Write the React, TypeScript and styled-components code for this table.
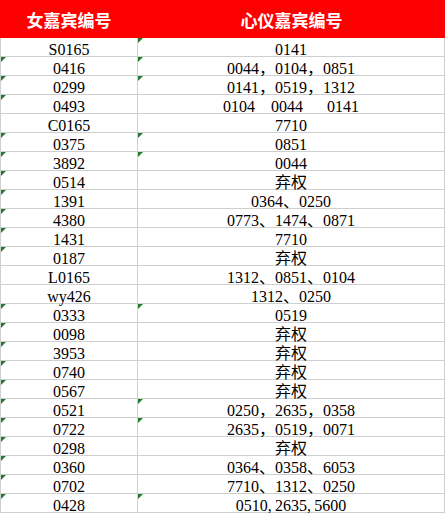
import styled, { createGlobalStyle } from "styled-components";

type Entry = {
  guest: string;
  picks: string;
  guestFlag: boolean;
  picksFlag: boolean;
};

const rows: Entry[] = [
  { guest: "S0165", picks: "0141", guestFlag: false, picksFlag: true },
  { guest: "0416", picks: "0044，0104，0851", guestFlag: true, picksFlag: true },
  { guest: "0299", picks: "0141，0519，1312", guestFlag: true, picksFlag: true },
  { guest: "0493", picks: "0104  0044   0141", guestFlag: true, picksFlag: false },
  { guest: "C0165", picks: "7710", guestFlag: false, picksFlag: false },
  { guest: "0375", picks: "0851", guestFlag: true, picksFlag: true },
  { guest: "3892", picks: "0044", guestFlag: true, picksFlag: true },
  { guest: "0514", picks: "弃权", guestFlag: true, picksFlag: false },
  { guest: "1391", picks: "0364、0250", guestFlag: true, picksFlag: false },
  { guest: "4380", picks: "0773、1474、0871", guestFlag: true, picksFlag: false },
  { guest: "1431", picks: "7710", guestFlag: true, picksFlag: false },
  { guest: "0187", picks: "弃权", guestFlag: true, picksFlag: false },
  { guest: "L0165", picks: "1312、0851、0104", guestFlag: false, picksFlag: false },
  { guest: "wy426", picks: "1312、0250", guestFlag: false, picksFlag: false },
  { guest: "0333", picks: "0519", guestFlag: true, picksFlag: true },
  { guest: "0098", picks: "弃权", guestFlag: true, picksFlag: false },
  { guest: "3953", picks: "弃权", guestFlag: true, picksFlag: false },
  { guest: "0740", picks: "弃权", guestFlag: true, picksFlag: false },
  { guest: "0567", picks: "弃权", guestFlag: true, picksFlag: false },
  { guest: "0521", picks: "0250，2635，0358", guestFlag: true, picksFlag: true },
  { guest: "0722", picks: "2635，0519，0071", guestFlag: true, picksFlag: true },
  { guest: "0298", picks: "弃权", guestFlag: true, picksFlag: false },
  { guest: "0360", picks: "0364、0358、6053", guestFlag: true, picksFlag: false },
  { guest: "0702", picks: "7710、1312、0250", guestFlag: true, picksFlag: false },
  { guest: "0428", picks: "0510,\u20092635,\u20095600", guestFlag: true, picksFlag: true },
];

const App = () => {
  return (
    <>
      <GlobalStyle />
      <Sheet>
        <HeaderRow>
          <HeaderCell>女嘉宾编号</HeaderCell>
          <HeaderCell>心仪嘉宾编号</HeaderCell>
        </HeaderRow>
        {rows.map((r, i) => (
          <DataRow key={i}>
            <Cell>
              {r.guestFlag && <TextFlag />}
              {r.guest}
            </Cell>
            <Cell>
              {r.picksFlag && <TextFlag />}
              {r.picks}
            </Cell>
          </DataRow>
        ))}
      </Sheet>
    </>
  );
};

export default App;

// ===== Styled Components ===== //

const GlobalStyle = createGlobalStyle`
  body {
    margin: 0;
    background: #ffffff;
  }
`;

const Sheet = styled.div`
  width: 445px;
  display: flex;
  flex-direction: column;
`;

const HeaderRow = styled.div`
  display: grid;
  grid-template-columns: 138px 307px;
  height: 38px;
  background-color: #ff0000;
`;

const HeaderCell = styled.div`
  padding-top: 2px;
  text-align: center;
  line-height: 36px;
  color: #ffffff;
  font-family: "Noto Sans CJK SC", sans-serif;
  font-weight: bold;
  font-size: 17px;
`;

const DataRow = styled.div`
  display: grid;
  grid-template-columns: 137px 307px;
  border-left: 1px solid #cfcfcf;
`;

const Cell = styled.div`
  position: relative;
  box-sizing: border-box;
  height: 19px;
  padding-top: 4px;
  border-right: 1px solid #cfcfcf;
  border-bottom: 1px solid #cfcfcf;
  text-align: center;
  white-space: pre;
  word-spacing: 4px;
  line-height: 15px;
  color: #000000;
  font-family: "Liberation Serif", "Noto Sans CJK SC", serif;
  font-size: 16px;
`;

const TextFlag = styled.span`
  position: absolute;
  top: 0;
  left: 0;
  width: 0;
  height: 0;
  border-top: 5px solid #217a2e;
  border-right: 5px solid transparent;
`;
